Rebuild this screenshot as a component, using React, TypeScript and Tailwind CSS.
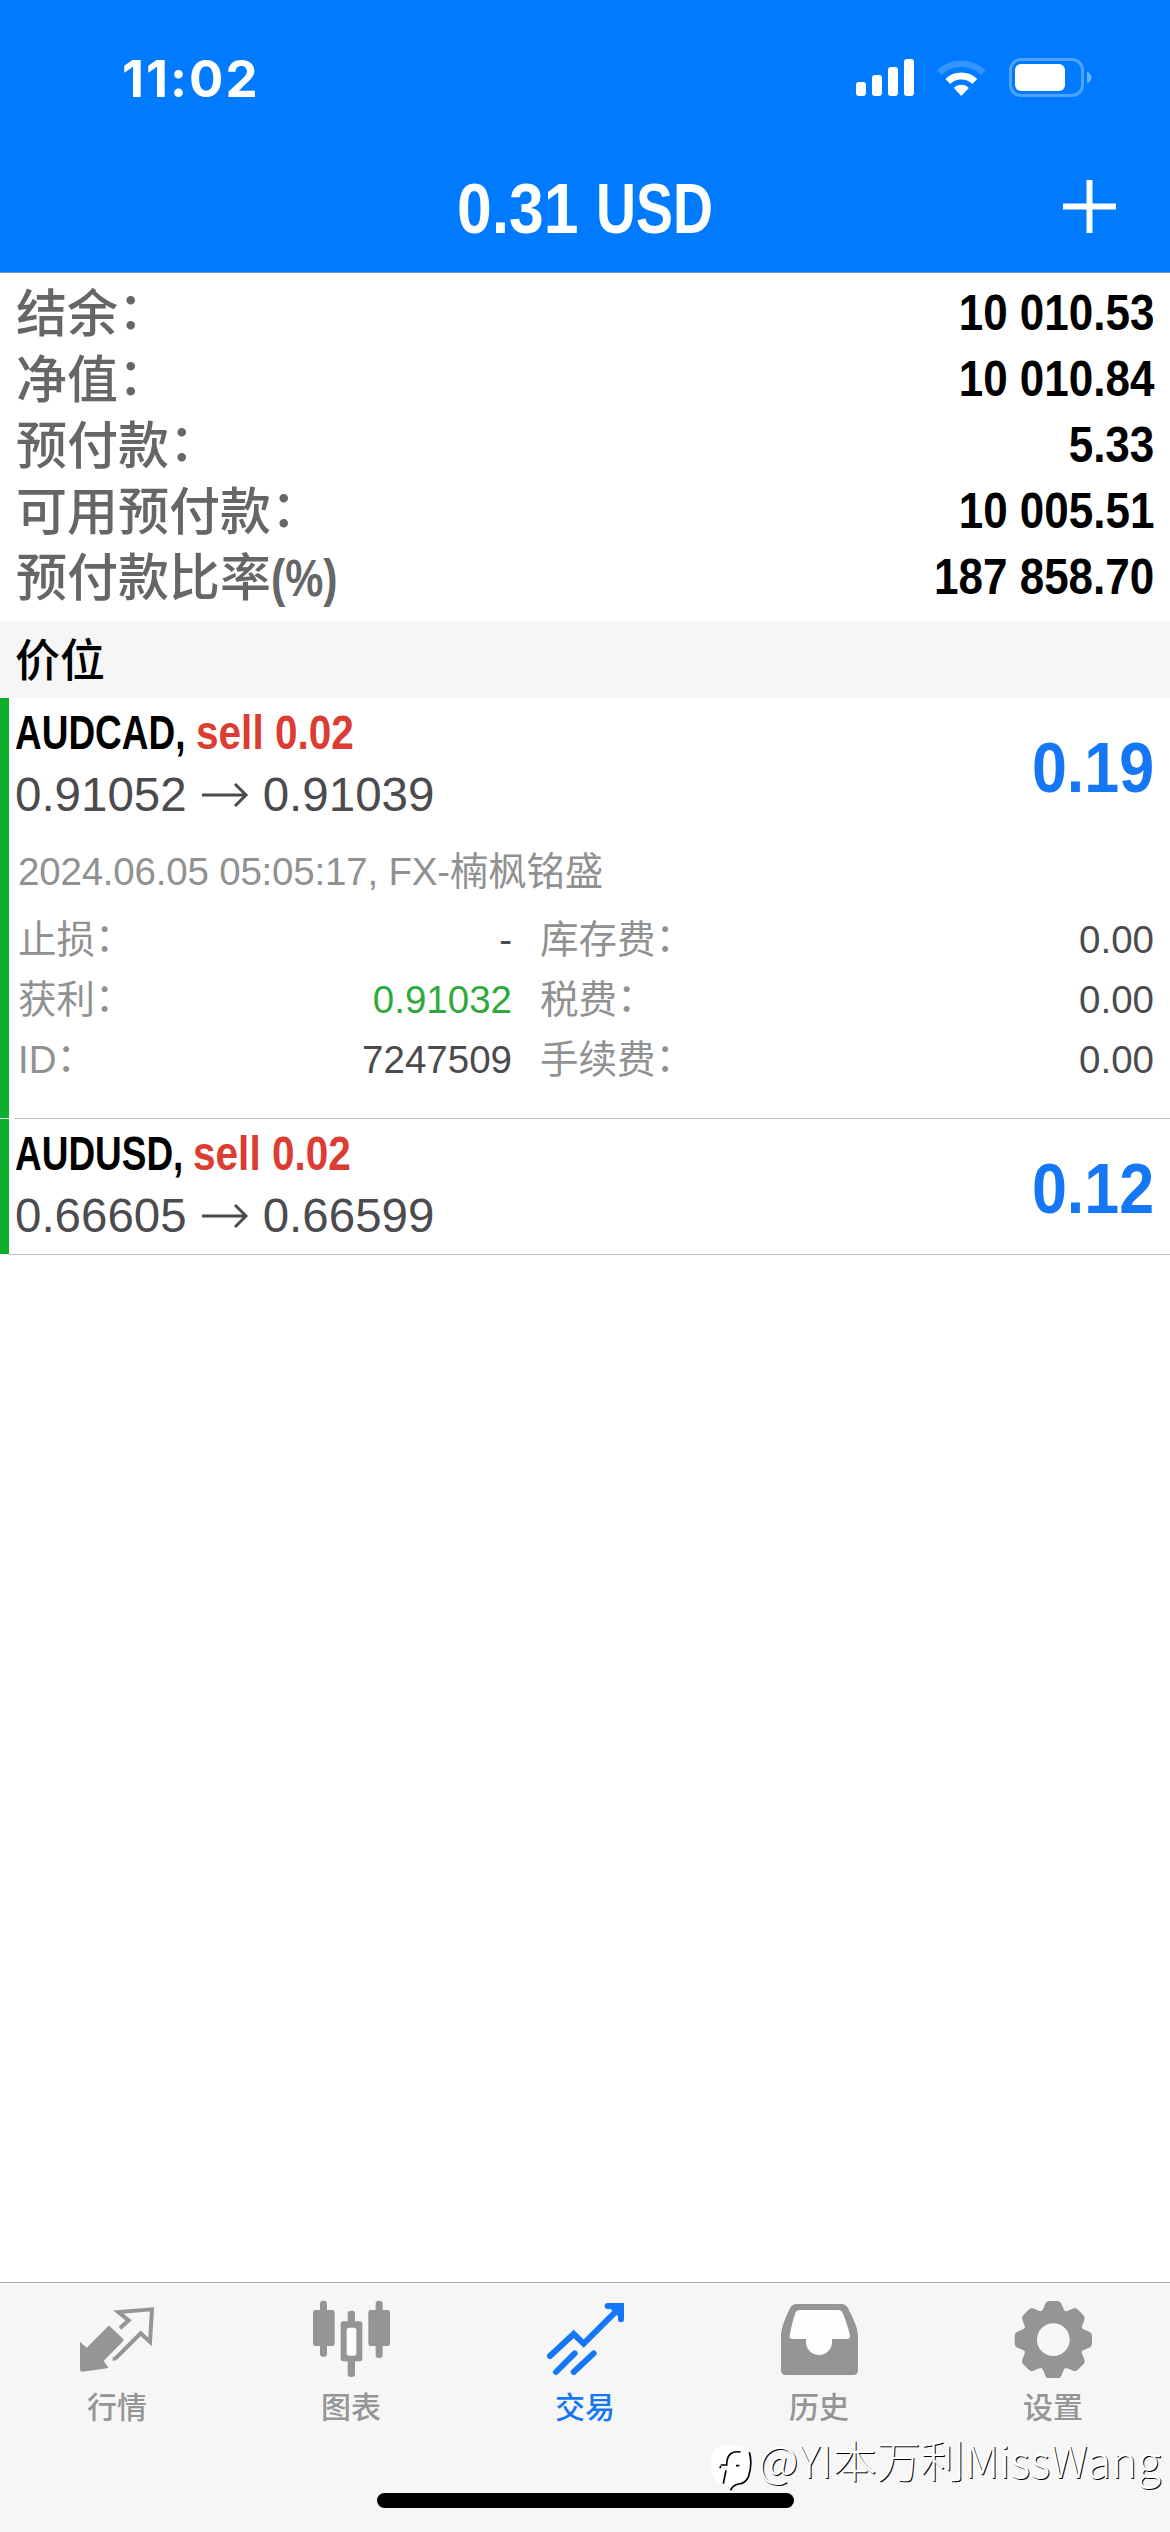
import clsx from "clsx";
import type { ReactNode } from "react";

interface Position {
  symbol: string;
  side: string;
  volume: string;
  openPrice: string;
  currentPrice: string;
  profit: string;
  details?: {
    comment: string;
    rows: { label: string; value: string; highlight?: boolean; feeLabel: string; fee: string }[];
  };
}

const summary = [
  { label: "结余", suffix: "：", value: "10 010.53" },
  { label: "净值", suffix: "：", value: "10 010.84" },
  { label: "预付款", suffix: "：", value: "5.33" },
  { label: "可用预付款", suffix: "：", value: "10 005.51" },
  { label: "预付款比率", suffix: "(%)", value: "187 858.70" },
];

const positions: Position[] = [
  {
    symbol: "AUDCAD",
    side: "sell",
    volume: "0.02",
    openPrice: "0.91052",
    currentPrice: "0.91039",
    profit: "0.19",
    details: {
      comment: "2024.06.05 05:05:17, FX-楠枫铭盛",
      rows: [
        { label: "止损", value: "-", feeLabel: "库存费", fee: "0.00" },
        { label: "获利", value: "0.91032", highlight: true, feeLabel: "税费", fee: "0.00" },
        { label: "ID", value: "7247509", feeLabel: "手续费", fee: "0.00" },
      ],
    },
  },
  {
    symbol: "AUDUSD",
    side: "sell",
    volume: "0.02",
    openPrice: "0.66605",
    currentPrice: "0.66599",
    profit: "0.12",
  },
];

function StatusIcons() {
  return (
    <svg width="240" height="40" viewBox="0 0 240 40" fill="#fff">
      <rect x="0" y="24" width="10" height="14" rx="3" />
      <rect x="16" y="17" width="10" height="21" rx="3" />
      <rect x="32" y="9" width="10" height="29" rx="3" />
      <rect x="48" y="1" width="10" height="37" rx="3" />
      <g transform="translate(105.3 38)">
        <path d="M-22 -23.500A32 32 0 0 1 22 -23.500" fill="none" stroke="#3395ff" strokeWidth="6.5" />
        <path d="M-13.5 -14.5A19.5 19.5 0 0 1 13.5 -14.5" fill="none" stroke="#fff" strokeWidth="7" />
        <path d="M0 0L-7.5 -8A10.5 10.5 0 0 1 7.5 -8Z" />
      </g>
      <rect x="154.500" y="1.500" width="72" height="36" rx="10.500" fill="none" stroke="#4da3ff" strokeWidth="3" />
      <rect x="159" y="6" width="50" height="27" rx="6" />
      <path d="M231 13.500C233.500 14.500 235.500 16.500 235.500 19.500S233.500 24.500 231 25.500Z" fill="#66b0ff" />
    </svg>
  );
}

function QuotesIcon() {
  return (
    <svg className="size-[78px]" viewBox="0 0 234 234">
      <path
        d="M6 125L26 143L88 81Q92 76 97 80L135 116Q139 120 135 124L77 183Q82 189 92 204L14 215Q6 216 6 207Z"
        fill="currentColor"
      />
      <path
        d="M126 85L152 61L121 36L222 28L216 126L188 100L115 173Q112 177 104 177"
        fill="none"
        stroke="currentColor"
        strokeWidth="12"
      />
    </svg>
  );
}

function ChartsIcon() {
  return (
    <svg className="size-[78px]" viewBox="0 0 234 234" fill="currentColor">
      <rect x="24" y="2" width="21" height="168" rx="9" />
      <rect x="3" y="30" width="65" height="108" rx="7" />
      <rect x="107" y="32" width="22" height="199" rx="9" />
      <rect x="86" y="64" width="65" height="120" rx="7" />
      <rect x="104" y="83" width="29" height="84" rx="8" fill="#fdfdfd" />
      <rect x="191" y="2" width="21" height="172" rx="9" />
      <rect x="169" y="30" width="65" height="108" rx="7" />
    </svg>
  );
}

function TradeIcon() {
  return (
    <svg
      className="size-[78px]"
      viewBox="0 0 234 234"
      fill="none"
      stroke="currentColor"
      strokeWidth="18"
      strokeLinecap="round"
    >
      <path d="M12 168L83 102L113 131L222 22" />
      <path d="M185 18H225V58" fill="currentColor" />
      <path d="M30 216L86 160M83 216L143 160" />
    </svg>
  );
}

function HistoryIcon() {
  return (
    <svg className="size-[78px]" viewBox="0 0 234 234">
      <path
        fill="currentColor"
        d="M3 108C3 80 20 46 29 26Q36 12 50 12H184Q198 12 205 26C214 46 234 80 234 108V211Q234 225 220 225H17Q3 225 3 211Z"
      />
      <path
        fill="#fdfdfd"
        d="M58 30H176Q184 31 187 37C196 57 206 87 210 106Q212 117 201 117H156V126A39 39 0 0 1 78 126V117H38Q27 117 29 106C33 87 39 57 47 37Q50 31 58 30Z"
      />
    </svg>
  );
}

function SettingsIcon() {
  return (
    <svg className="size-[78px]" viewBox="0 0 234 234">
      <g transform="translate(118 119)">
        <circle r="70" fill="none" stroke="currentColor" strokeWidth="42" />
        {[0, 45, 90, 135, 180, 225, 270, 315].map((angle) => (
          <path
            key={angle}
            transform={`rotate(${angle})`}
            fill="currentColor"
            d="M-40 -80Q-31 -88 -28 -98L-24 -108Q-21 -116 -12 -116H12Q21 -116 24 -108L28 -98Q31 -88 40 -80Z"
          />
        ))}
      </g>
    </svg>
  );
}

function Arrow() {
  return (
    <svg className="mx-3.5" width="48" height="26" viewBox="0 0 48 26" fill="none" stroke="currentColor" strokeWidth="3">
      <path d="M1 13H45M34 2L45 13L34 24" />
    </svg>
  );
}

// Full-width colon, raised to the middle of the characters
function Colon() {
  return <span className="inline-block -translate-y-[0.06em]">：</span>;
}

function PositionRow({ position, last }: { position: Position; last: boolean }) {
  const { details } = position;
  return (
    <div className="flex">
      <div className="mb-px w-[9px] bg-[#0db02b]" />
      <div className={clsx("flex-1 border-b border-[#bcbcbc] pr-4", last ? "pl-1.5" : "ml-1.5")}>
        <div className="flex h-[135px] justify-between">
          <div className="flex flex-col pt-[5px]">
            <div className="flex h-[60px] items-center text-[48px] font-bold whitespace-pre">
              <span className="-mr-[54px] origin-left scale-x-[0.77] text-black">{position.symbol}, </span>
              <span className="origin-left scale-x-[0.845] text-[#dc3d32]">
                {position.side} {position.volume}
              </span>
            </div>
            <div className="flex h-16 items-center text-[47.5px] text-[#4b4b4e]">
              {position.openPrice}
              <Arrow />
              {position.currentPrice}
            </div>
          </div>
          <div className="flex origin-right scale-x-[0.885] items-center pt-1 text-[71px] font-bold text-[#1577f5]">
            {position.profit}
          </div>
        </div>
        {details && (
          <div className="h-[285px] pt-[9px] pl-[3px] text-[38.5px] text-[#919191]">
            <p className="flex h-[60px] items-center tracking-[-0.2px]">{details.comment}</p>
            <div className="mt-2">
              {details.rows.map((row) => (
                <div key={row.label} className="flex h-[60px] items-center">
                  <span>
                    {row.label}
                    <Colon />
                  </span>
                  <span
                    className={clsx(
                      "ml-auto shrink-0",
                      row.highlight ? "text-[#2fa93c]" : "text-[#4b4b4e]"
                    )}
                  >
                    {row.value}
                  </span>
                  <span className="ml-7 flex w-[614px] items-center justify-between">
                    <span>
                      {row.feeLabel}
                      <Colon />
                    </span>
                    <span className="text-[#4b4b4e]">{row.fee}</span>
                  </span>
                </div>
              ))}
            </div>
          </div>
        )}
      </div>
    </div>
  );
}

function Tab({ label, active, children }: { label: string; active?: boolean; children: ReactNode }) {
  return (
    <div className={clsx("flex flex-1 flex-col items-center pt-[17px]", active ? "text-[#1577f5]" : "text-[#959595]")}>
      {children}
      <span className="mt-2 text-[30px] leading-[44px] font-medium">{label}</span>
    </div>
  );
}

export default function App() {
  return (
    <div className="relative flex h-[2532px] w-[1170px] flex-col overflow-hidden bg-white leading-none font-['Liberation_Sans','Noto_Sans_CJK_SC',sans-serif]">
      <header className="h-[273px] border-b border-[#6f93bd] bg-[#007aff] text-white">
        <div className="flex h-[156px] items-center justify-between pr-[74px] pl-[122px]">
          <span className="text-[51px] font-bold tracking-[2px] font-['Inter',sans-serif]">11:02</span>
          <StatusIcons />
        </div>
        <div className="grid h-[104px] grid-cols-[1fr_auto_1fr] items-center">
          <h1 className="col-start-2 flex text-[71px] font-bold whitespace-pre">
            <span className="-mr-[19px] origin-left scale-x-[0.88]">0.31 </span>
            <span className="-mr-[32px] origin-left scale-x-[0.78]">USD</span>
          </h1>
          <svg className="mr-[54px] mb-1 justify-self-end" width="53" height="53" viewBox="0 0 53 53" stroke="#fff" strokeWidth="6">
            <path d="M26.500 0V53M0 26.500H53" />
          </svg>
        </div>
      </header>

      {/* Account summary */}
      <section className="h-[348px] px-4 pt-[7px]">
        {summary.map((item) => (
          <div key={item.label} className="flex h-[66px] items-center justify-between">
            <span className="pt-0.5 text-[51px] font-medium text-[#666]">
              {item.label}
              {item.suffix === "：" ? (
                <Colon />
              ) : (
                <span className="inline-block origin-left scale-x-[0.84] font-bold">{item.suffix}</span>
              )}
            </span>
            <span className="origin-right scale-x-[0.88] text-[50px] font-bold text-black">{item.value}</span>
          </div>
        ))}
      </section>

      <h2 className="flex h-[77px] items-center bg-[#f6f6f6] pt-[3px] pl-[15px] text-[45px] font-medium text-black">价位</h2>

      <main className="flex-1">
        {positions.map((position, i) => (
          <PositionRow key={position.symbol} position={position} last={i === positions.length - 1} />
        ))}
      </main>

      <nav className="flex h-[250px] flex-col border-t border-[#a9a9a9] bg-[#f6f6f6]">
        <div className="flex h-[210px]">
          <Tab label="行情">
            <QuotesIcon />
          </Tab>
          <Tab label="图表">
            <ChartsIcon />
          </Tab>
          <Tab label="交易" active>
            <TradeIcon />
          </Tab>
          <Tab label="历史">
            <HistoryIcon />
          </Tab>
          <Tab label="设置">
            <SettingsIcon />
          </Tab>
        </div>
        <div className="mx-auto h-[15px] w-[417px] rounded-full bg-black" />
      </nav>

      {/* Author watermark */}
      <div className="absolute right-[9px] bottom-[41px] flex items-end text-white">
        <svg className="mr-1.5" width="42" height="48" viewBox="0 0 126 144">
          <path
            d="M40 8H86Q126 10 122 66Q120 112 86 122Q70 124 62 142Q60 126 46 120Q6 124 3 66Q2 10 40 8Z"
            fill="#fff"
          />
          <path
            d="M118 28Q128 60 116 100Q106 122 86 123Q68 126 62 142M92 27Q70 24 60 34Q50 44 50 66H32M30 76L32 69M48 82L40 122M78 68H88"
            fill="none"
            stroke="#000"
            strokeWidth="5"
          />
        </svg>
        <span className="mb-2.5 text-[44px] font-light [text-shadow:1px_1px_0_#000] font-['Noto_Sans_CJK_SC',sans-serif]">
          @YI本万利MissWang
        </span>
      </div>
    </div>
  );
}
